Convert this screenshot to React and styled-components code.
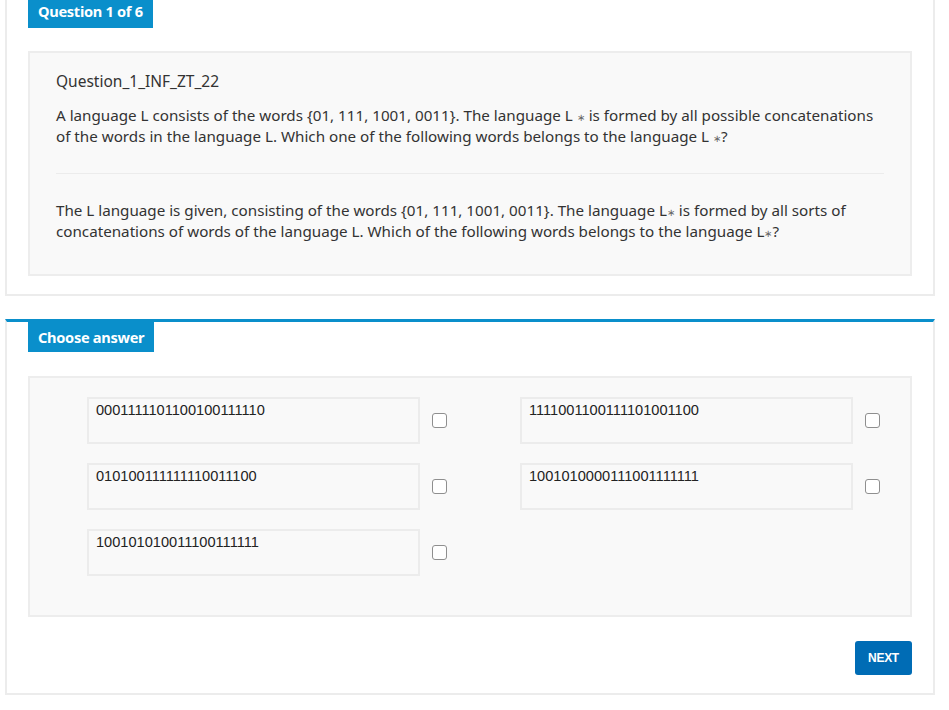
import React from "react";
import styled, { createGlobalStyle } from "styled-components";

const GlobalStyle = createGlobalStyle`
  body {
    margin: 0;
    background: #fff;
    font-family: "Noto Sans", "Open Sans", sans-serif;
    color: #333;
  }
`;

const answers = [
  "0001111101100100111110",
  "1111001100111101001100",
  "010100111111110011100",
  "1001010000111001111111",
  "100101010011100111111",
];

const Page = styled.div`
  padding: 0 14px 14px 5px;
  display: flex;
  flex-direction: column;
  gap: 23px;
`;

const Card = styled.section`
  border: 2px solid #ececec;
  border-top: ${({ $accent }) => ($accent ? "3px solid #0a8fcb" : "none")};
  padding: 0 21px 18px 21px;
`;

const Badge = styled.div`
  display: inline-block;
  background: #0a8fcb;
  color: #fff;
  font-weight: 700;
  font-size: 14.6px;
  line-height: ${({ $top }) => ($top ? "23px" : "30px")};
  padding: 0 10px ${({ $top }) => ($top ? "5px" : "0")} 10px;
  letter-spacing: -0.3px;
`;

const Panel = styled.div`
  margin-top: ${({ $top }) => $top}px;
  background: #f9f9f9;
  border: 2px solid #ededed;
`;

const QuestionBody = styled.div`
  padding: 18px 26px 32px 26px;
  font-size: 15.2px;
  line-height: 21px;
`;

const Title = styled.div`
  margin-bottom: 13px;
  font-size: 15.5px;
`;

const Para = styled.p`
  margin: 0;
`;

const Divider = styled.hr`
  border: none;
  border-top: 1px solid #ececec;
  margin: 26px 0 26px 0;
`;

const Star = styled.span`
  font-size: 10px;
  line-height: 0;
  color: #666;
`;

const AnswerGrid = styled.div`
  display: grid;
  grid-template-columns: 433px 1fr;
  row-gap: 19px;
  padding: 19px 0 39px 57px;
`;

const AnswerCell = styled.div`
  display: flex;
  align-items: center;
  gap: 12px;
`;

const AnswerBox = styled.div`
  width: 333px;
  height: 47px;
  box-sizing: border-box;
  border: 2px solid #ececec;
  background: #f9f9f9;
  font-family: "Liberation Sans", Arial, sans-serif;
  font-size: 14.6px;
  color: #222;
  padding: 3px 7px;
`;

const Check = styled.span`
  width: 15px;
  height: 15px;
  box-sizing: border-box;
  border: 1px solid #8f8f8f;
  border-radius: 3px;
  background: #fff;
  flex: none;
`;

const Footer = styled.div`
  display: flex;
  justify-content: flex-end;
  margin-top: 24px;
`;

const NextButton = styled.button`
  background: #006cb5;
  color: #fff;
  border: none;
  border-radius: 3px;
  width: 57px;
  height: 34px;
  font-family: "Liberation Sans", Arial, sans-serif;
  font-weight: 700;
  font-size: 12px;
  letter-spacing: -0.3px;
  padding: 0;
`;

const Answer = ({ text }) => (
  <AnswerCell>
    <AnswerBox>{text}</AnswerBox>
    <Check />
  </AnswerCell>
);

const App = () => (
  <>
    <GlobalStyle />
    <Page>
      <Card>
        <Badge $top>Question 1 of 6</Badge>
        <Panel $top={23}>
          <QuestionBody>
            <Title>Question_1_INF_ZT_22</Title>
            <Para>
              A language L consists of the words {"{"}01, 111, 1001, 0011{"}"}. The language L <Star>∗</Star> is
              formed by all possible concatenations of the words in the language L. Which one of the following
              words belongs to the language L <Star>∗</Star>?
            </Para>
            <Divider />
            <Para>
              The L language is given, consisting of the words {"{"}01, 111, 1001, 0011{"}"}. The language L
              <Star>∗</Star> is formed by all sorts of concatenations of words of the language L. Which of the
              following words belongs to the language L<Star>∗</Star>?
            </Para>
          </QuestionBody>
        </Panel>
      </Card>
      <Card $accent>
        <Badge>Choose answer</Badge>
        <Panel $top={24}>
          <AnswerGrid>
            {answers.map((a) => (
              <Answer key={a} text={a} />
            ))}
          </AnswerGrid>
        </Panel>
        <Footer>
          <NextButton>NEXT</NextButton>
        </Footer>
      </Card>
    </Page>
  </>
);

export default App;
